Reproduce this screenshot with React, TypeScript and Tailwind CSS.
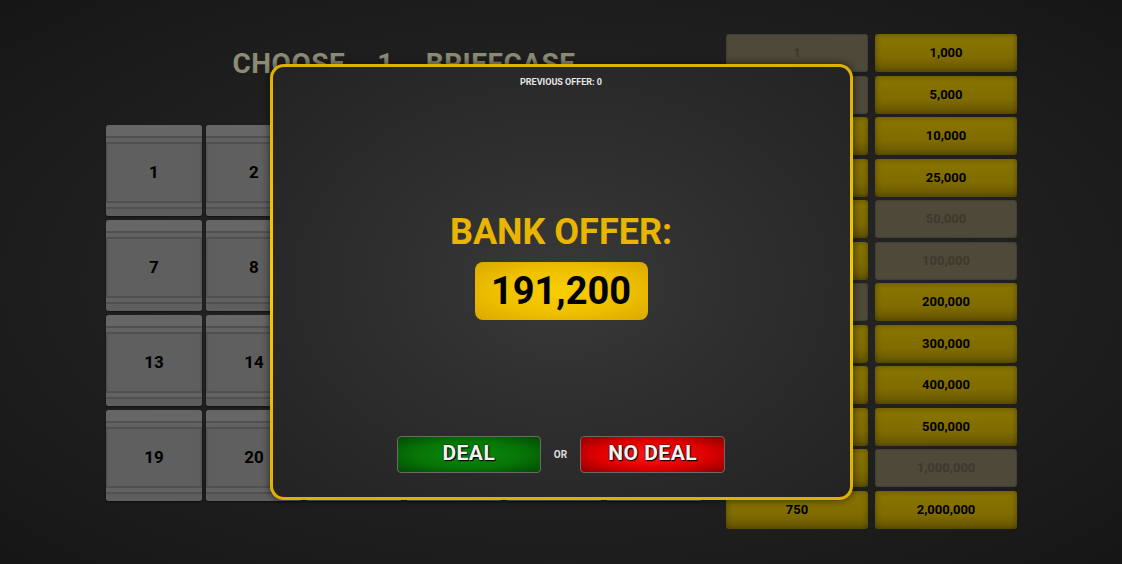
import React from 'react';

const font = { fontFamily: 'Roboto, "Open Sans", "Liberation Sans", sans-serif' };

const leftPrizes = [
  { label: '1', out: true },
  { label: '5', out: true },
  { label: '10', out: false },
  { label: '25', out: false },
  { label: '50', out: false },
  { label: '75', out: false },
  { label: '100', out: true },
  { label: '200', out: false },
  { label: '300', out: false },
  { label: '400', out: false },
  { label: '500', out: false },
  { label: '750', out: false },
];

const rightPrizes = [
  { label: '1,000', out: false },
  { label: '5,000', out: false },
  { label: '10,000', out: false },
  { label: '25,000', out: false },
  { label: '50,000', out: true },
  { label: '100,000', out: true },
  { label: '200,000', out: false },
  { label: '300,000', out: false },
  { label: '400,000', out: false },
  { label: '500,000', out: false },
  { label: '1,000,000', out: true },
  { label: '2,000,000', out: false },
];

function Briefcase({ n }: { n: number }) {
  return (
    <div className="flex h-[91px] flex-col rounded-[3px] bg-[#5f5f5f] shadow-[inset_0_0_3px_rgba(0,0,0,0.45),0_1px_2px_rgba(0,0,0,0.5)]">
      <div className="h-[13px] border-b-2 border-[#505050] bg-[#666666] rounded-t-[3px]" />
      <div className="h-[6px] border-b-2 border-[#505050] bg-[#626262]" />
      <div className="flex flex-1 items-center justify-center text-[17px] font-bold text-black">{n}</div>
      <div className="h-[6px] border-t-2 border-[#505050] bg-[#626262]" />
      <div className="h-[9px] border-t-2 border-[#505050] bg-[#5e5e5e] rounded-b-[3px]" />
    </div>
  );
}

function Prize({ label, out }: { label: string; out: boolean }) {
  return (
    <div
      className={
        out
          ? 'flex h-[38px] items-center justify-center rounded-[3px] bg-[#4e4938] text-[13px] font-bold text-[#3c392d] shadow-[inset_0_0_2px_rgba(0,0,0,0.4)]'
          : 'flex h-[38px] items-center justify-center rounded-[3px] bg-[linear-gradient(180deg,#8a7600_0%,#806c00_60%,#665600_100%)] text-[13px] font-bold text-black shadow-[inset_0_0_6px_rgba(0,0,0,0.35)]'
      }
    >
      {label}
    </div>
  );
}

export default function App() {
  return (
    <div
      className="relative min-h-[564px] w-full overflow-hidden bg-[radial-gradient(ellipse_at_center,#2c2c2c_0%,#222222_45%,#161616_100%)]"
      style={font}
    >
      <div className="flex gap-[24px] pl-[106px] pt-[34px]">
        <div className="w-[596px] pt-[16px]">
          <div className="mb-[47px] flex h-[28px] items-center justify-center gap-[32px] text-[28px] leading-none font-bold tracking-[0.5px] text-[#8c8b74]">
            <span>CHOOSE</span>
            <span>1</span>
            <span>BRIEFCASE</span>
          </div>
          <div className="grid grid-cols-6 gap-[4px]">
            {Array.from({ length: 24 }, (_, i) => (
              <Briefcase key={i} n={i + 1} />
            ))}
          </div>
        </div>
        <div className="grid w-[291px] grid-cols-2 gap-x-[7px] gap-y-[3.5px] grid-flow-col grid-rows-12">
          {leftPrizes.map((p) => (
            <Prize key={'l' + p.label} label={p.label} out={p.out} />
          ))}
          {rightPrizes.map((p) => (
            <Prize key={'r' + p.label} label={p.label} out={p.out} />
          ))}
        </div>
      </div>

      {/* bank offer modal */}
      <div className="absolute inset-0 flex items-center justify-center">
        <div className="rounded-[14px] bg-[linear-gradient(180deg,#e0b000,#f7cc00_50%,#e0b000)] p-[3px] shadow-[0_0_8px_rgba(0,0,0,0.6)]">
          <div className="flex h-[430px] w-[577px] flex-col items-center rounded-[11px] bg-[radial-gradient(ellipse_at_center,#393939_0%,#2e2e2e_45%,#232323_100%)]">
            <div className="mt-[9px] text-[9px] font-bold text-[#e6e6e6]">PREVIOUS OFFER: 0</div>
            <div className="mt-[124px] text-[36px] leading-none font-bold text-[#e9b500]">BANK OFFER:</div>
            <div className="mt-[12px] flex h-[58px] w-[173px] items-center justify-center rounded-[8px] bg-[radial-gradient(ellipse_at_center,#f9cf00_0%,#eebf00_55%,#d9a800_100%)] text-[38px] leading-none font-bold text-black">
              191,200
            </div>
            <div className="mt-[116px] flex items-center gap-[13px]">
              <button className="h-[37px] w-[144px] rounded-[4px] border border-[#6a6a6a] bg-[radial-gradient(ellipse_at_center,#0b8c0b_0%,#077407_55%,#034a03_100%)] text-[21px] font-bold tracking-[0.5px] text-[#f2f2f2] [text-shadow:0_0_2px_#000,1px_1px_1px_#000]">
                DEAL
              </button>
              <span className="text-[10px] font-bold text-[#dcdcdc]">OR</span>
              <button className="h-[37px] w-[145px] rounded-[4px] border border-[#6a6a6a] bg-[radial-gradient(ellipse_at_center,#ff1a1a_0%,#e00000_55%,#8c0000_100%)] text-[21px] font-bold tracking-[0.5px] text-[#f2f2f2] [text-shadow:0_0_2px_#000,1px_1px_1px_#000]">
                NO DEAL
              </button>
            </div>
          </div>
        </div>
      </div>
    </div>
  );
}
